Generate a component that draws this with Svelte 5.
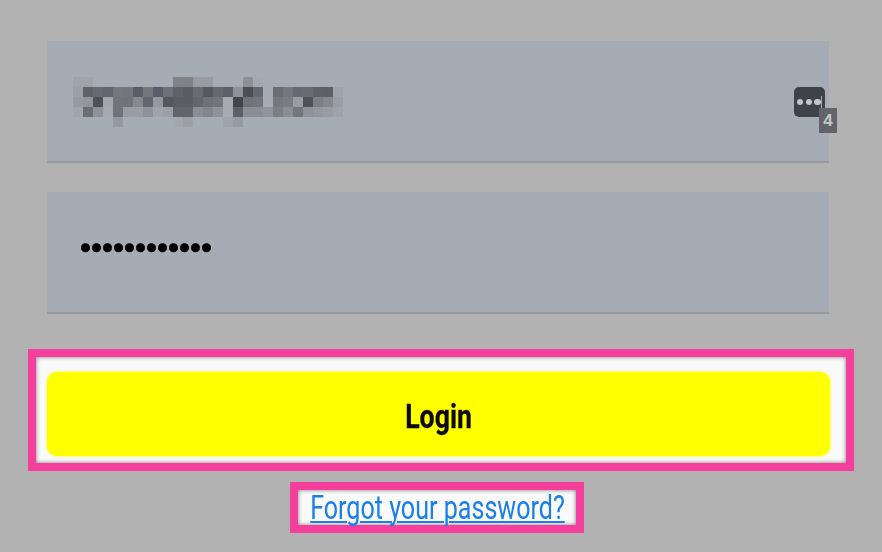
<script>
  const bg = "#a6acb5";
  // pixelated e-mail value, one row per mosaic line ("" = field colour)
  const mosaic = [
    ["a0a3ab","a0a3ab","","","","","","","","","7f8289","7f8289","989ba3","989ba3","","","","8d9097","a5a8b0","","","","","","","",""],
    ["9c9fa7","5f6269","666970","636670","75787f","72757c","5a5d68","74777f","5a5d69","6e7179","5f6269","5a5d63","686b72","55585f","65686e","5d6068","8f929a","4b4e55","65686e","","6a6d75","74777e","666973","686b73","5e6168","5d6067","a0a3ab"],
    ["979aa2","92959d","4e5158","a3a6ae","70737a","6f7278","868990","62656f","9598a0","54575c","5a5d64","5a5d64","63666d","6e7178","72757c","a8abb3","42454c","6f7279","72757c","","74777e","797c83","9a9da5","4f5259","7c7f86","85888f","9a9da5"],
    ["a2a5ad","6a6d74","8f929a","a6a9b1","6f727a","999ca4","9a9da5","8e9199","a0a3ab","9c9fa7","62656c","62656c","8a8d95","82858d","90939b","a8abb3","5d6067","8b8e96","8b8e96","92959d","7b7e85","8a8d95","74777e","8f929a","94979f","999ca4","a0a3ab"],
    ["","","","","9598a0","","","","","","a4a7af","9c9fa7","","","","a0a3ab","969aa2","","","","","","","","","",""]
  ];
  const cells = mosaic.flat().map((c) => (c ? "#" + c : bg));
</script>

<main class="page">
  <div class="field email">
    <div class="mosaic">
      {#each cells as c}
        <span style:background-color={c}></span>
      {/each}
    </div>
    <div class="keys">
      <i></i><i></i><i></i>
      <b class="bar"></b>
      <span class="badge">4</span>
    </div>
  </div>

  <div class="field password">
    <span class="dots">••••••••••••</span>
  </div>

  <div class="highlight login-box">
    <button class="login"><span>Login</span></button>
  </div>

  <div class="highlight forgot-box">
    <a href="#forgot" class="forgot">Forgot your password?</a>
  </div>
</main>

<style>
  :global(body) {
    margin: 0;
    background: #b2b2b2;
  }
  .page {
    width: 882px;
    height: 552px;
    box-sizing: border-box;
    padding-top: 41px;
    display: flex;
    flex-direction: column;
    align-items: flex-start;
    overflow: hidden;
    font-family: Roboto, "Liberation Sans", sans-serif;
    filter: blur(0.4px);
  }
  .field {
    width: 782px;
    height: 122px;
    margin-left: 47px;
    box-sizing: border-box;
    background: #a6acb5;
    border-bottom: 2px solid #97999f;
    display: flex;
    align-items: center;
    justify-content: space-between;
  }
  .email {
    padding: 0 4px 0 26px;
    margin-bottom: 29px;
  }
  .mosaic {
    display: grid;
    grid-template-columns: repeat(27, 10px);
    grid-auto-rows: 10px;
    margin-top: 2px;
    filter: blur(0.4px);
  }
  .keys {
    position: relative;
    width: 31px;
    height: 30px;
    margin-top: 2px;
    box-sizing: border-box;
    padding-left: 3px;
    display: flex;
    align-items: center;
    gap: 2.2px;
    background: #404249;
    border-radius: 5px;
  }
  .keys i {
    width: 6.4px;
    height: 6.4px;
    border-radius: 50%;
    background: #c4c5c9;
  }
  .keys .bar {
    position: absolute;
    left: 27px;
    top: 9px;
    width: 1px;
    height: 14px;
    background: #a9abb0;
  }
  .badge {
    position: absolute;
    left: 25px;
    top: 21px;
    width: 18px;
    height: 25px;
    background: #62646a;
    color: #c6c6c8;
    font: 700 17px/25px "Liberation Sans", sans-serif;
    text-align: center;
  }
  .password {
    padding-left: 33px;
    margin-bottom: 35px;
  }
  .dots {
    color: #000;
    font: 31.4px/1 "Liberation Sans", sans-serif;
    -webkit-text-stroke: 0.6px #000;
    margin-top: -8px;
  }
  .highlight {
    box-sizing: border-box;
    border: 8px solid #f43f9d;
    background: #fafafa;
    box-shadow: inset 0 0 4px #777;
  }
  .login-box {
    width: 826px;
    height: 122px;
    margin-left: 28px;
    padding: 15px 0 0 11px;
  }
  .login {
    display: flex;
    align-items: center;
    justify-content: center;
    width: 783px;
    height: 84px;
    padding: 0;
    border: 0;
    border-radius: 10px;
    background: #ffff00;
    box-shadow: 0 0 3px #ffff00;
    color: #0b0b00;
    font: 700 34px/1 Roboto, sans-serif;
    -webkit-text-stroke: 0.3px #0b0b00;
  }
  .login span {
    display: block;
    margin-top: 3px;
    transform: scaleX(0.785);
  }
  .forgot-box {
    width: 294px;
    height: 51px;
    margin: 11px 0 0 290px;
    display: flex;
    align-items: center;
    justify-content: center;
  }
  .forgot {
    display: block;
    white-space: nowrap;
    color: #1a7fe8;
    font-size: 33px;
    line-height: 34px;
    text-decoration: underline;
    text-decoration-thickness: 2px;
    text-underline-offset: 2px;
    transform: scaleX(0.76);
  }
</style>
